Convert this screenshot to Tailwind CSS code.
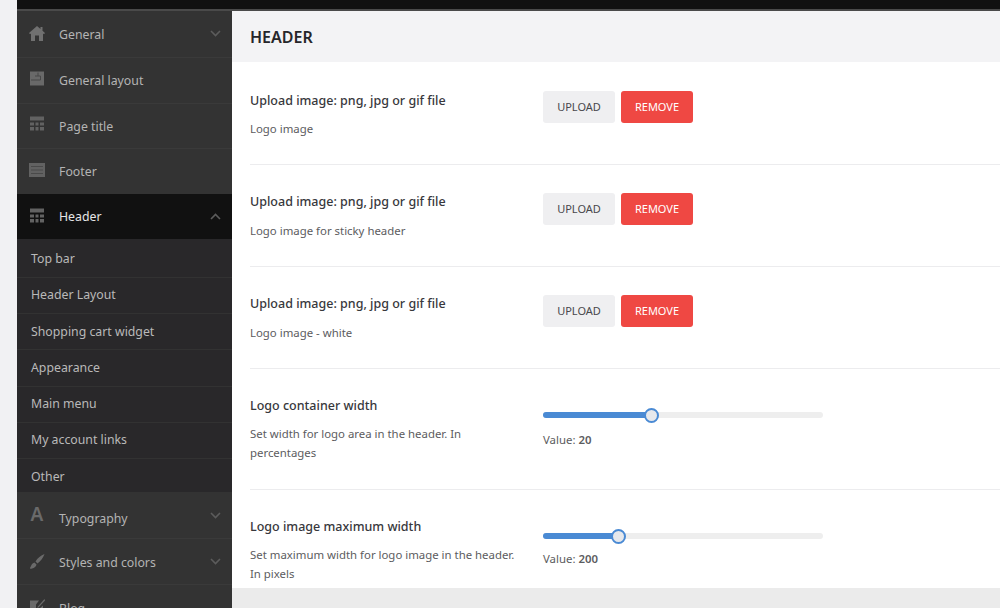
<!DOCTYPE html>
<html lang="en">
<head>
    <meta charset="UTF-8">
    <title>Theme options</title>
    <script src="https://cdn.jsdelivr.net/npm/@tailwindcss/browser@4"></script>
</head>
<body class="bg-[#f1f1f3] font-['Noto_Sans','Open_Sans',sans-serif]">
<div class="flex h-[608px] w-[1000px] overflow-hidden pl-[17px]">

    <!-- SIDEBAR -->
    <aside class="w-[215px] shrink-0 flex flex-col bg-[#333333] text-[12.300px] text-[#b4b4b4]">
        <div class="h-[9px] bg-[#111111] shrink-0"></div>
        <div class="h-[2px] bg-[#4a4a4a] shrink-0"></div>

        <a class="h-[47px] pt-[3px] shrink-0 flex items-center pl-[12px] pr-[11px] border-b border-[#3a3a3a]">
            <svg class="w-[16px] h-[16px] mr-[14px] shrink-0 -translate-y-[2.500px]" viewBox="0 0 16 16" fill="#707070"><path d="M8 0.500 0 7.500 1 8.700 2 7.900V15.500H6V10H10V15.500H14V7.900L15 8.700 16 7.500 13.500 5.300V1.500H11.500V3.600Z"/></svg>
            <span class="flex-1">General</span>
            <svg class="w-[11px] h-[7px] -translate-y-[2px]" viewBox="0 0 11 7" fill="none" stroke="#5c5c5c" stroke-width="1.6"><path d="M1 1 5.500 5.500 10 1"/></svg>
        </a>
        <a class="h-[46px] pt-[2px] shrink-0 flex items-center pl-[12px] pr-[11px] border-b border-[#3a3a3a]">
            <svg class="w-[16px] h-[16px] mr-[14px] shrink-0 -translate-y-[3.500px]" viewBox="0 0 16 16"><path fill="#696969" d="M1 1H15V15H1Z"/><path fill="none" stroke="#484848" stroke-width="1" d="M2 9.500H11.500V5.500H6M9 2V5.500"/></svg>
            <span class="flex-1">General layout</span>
        </a>
        <a class="h-[45px] pt-[2px] shrink-0 flex items-center pl-[12px] pr-[11px] border-b border-[#3a3a3a]">
            <svg class="w-[16px] h-[16px] mr-[14px] shrink-0 -translate-y-[3.500px]" viewBox="0 0 16 16" fill="#626262"><path d="M1 1H15V5H1ZM1 7H5V10H1ZM6.500 7H9.500V10H6.500ZM11 7H15V10H11ZM1 11.500H5V15H1ZM6.500 11.500H9.500V15H6.500ZM11 11.500H15V15H11Z"/></svg>
            <span class="flex-1">Page title</span>
        </a>
        <a class="h-[45px] pt-[2px] shrink-0 flex items-center pl-[12px] pr-[11px]">
            <svg class="w-[16px] h-[16px] mr-[14px] shrink-0 -translate-y-[3px]" viewBox="0 0 16 16"><path fill="#626262" d="M0 1H16V15H0Z"/><path fill="none" stroke="#4a4a4a" stroke-width="1" d="M2 4.500H14M2 8H14M2 11.500H14"/></svg>
            <span class="flex-1">Footer</span>
        </a>

        <a class="h-[45px] pt-[2px] shrink-0 flex items-center pl-[12px] pr-[11px] bg-[#111111] text-[#e6e6e6]">
            <svg class="w-[16px] h-[16px] mr-[14px] shrink-0 -translate-y-[2.500px]" viewBox="0 0 16 16" fill="#626262"><path d="M1 1H15V5H1ZM1 7H5V10H1ZM6.500 7H9.500V10H6.500ZM11 7H15V10H11ZM1 11.500H5V15H1ZM6.500 11.500H9.500V15H6.500ZM11 11.500H15V15H11Z"/></svg>
            <span class="flex-1">Header</span>
            <svg class="w-[11px] h-[7px] -translate-y-[1px]" viewBox="0 0 11 7" fill="none" stroke="#5c5c5c" stroke-width="1.6"><path d="M1 6 5.500 1.500 10 6"/></svg>
        </a>

        <!-- HEADER SUBMENU -->
        <div class="h-[253px] shrink-0 flex flex-col bg-[#29282a] text-[#b9b9b9] pt-[2.500px]">
            <a class="h-[36.300px] shrink-0 flex items-center px-[14px] border-b border-[#323232]">Top bar</a>
            <a class="h-[36.300px] shrink-0 flex items-center px-[14px] border-b border-[#323232]">Header Layout</a>
            <a class="h-[36.300px] shrink-0 flex items-center px-[14px] border-b border-[#323232]">Shopping cart widget</a>
            <a class="h-[36.300px] shrink-0 flex items-center px-[14px] border-b border-[#323232]">Appearance</a>
            <a class="h-[36.300px] shrink-0 flex items-center px-[14px] border-b border-[#323232]">Main menu</a>
            <a class="h-[36.300px] shrink-0 flex items-center px-[14px] border-b border-[#323232]">My account links</a>
            <a class="h-[32.700px] pt-[3px] shrink-0 flex items-center px-[14px]">Other</a>
        </div>

        <a class="h-[47px] pt-[8px] shrink-0 flex items-center pl-[12px] pr-[11px] border-b border-[#3a3a3a]">
            <span class="w-[16px] mr-[14px] shrink-0 text-center text-[19px] leading-none font-semibold text-[#6a6a6a] -translate-y-[5px]">A</span>
            <span class="flex-1">Typography</span>
            <svg class="w-[11px] h-[7px] -translate-y-[4px]" viewBox="0 0 11 7" fill="none" stroke="#5c5c5c" stroke-width="1.6"><path d="M1 1 5.500 5.500 10 1"/></svg>
        </a>
        <a class="h-[46px] pt-[4px] shrink-0 flex items-center pl-[12px] pr-[11px] border-b border-[#3a3a3a]">
            <svg class="w-[16px] h-[16px] mr-[14px] shrink-0 -translate-y-[2.500px]" viewBox="0 0 16 16" fill="#6a6a6a"><path d="M15.500 0.500C12 2 8.500 4.500 6.500 8L8.500 10C11.500 7.500 14.500 4 15.500 0.500ZM5.500 9C3 9.500 2.500 11.500 1 14.500 1 15.500 2 15.500 3 15 5.500 14.500 7 13 7.500 11Z"/></svg>
            <span class="flex-1">Styles and colors</span>
            <svg class="w-[11px] h-[7px] -translate-y-[2px]" viewBox="0 0 11 7" fill="none" stroke="#5c5c5c" stroke-width="1.6"><path d="M1 1 5.500 5.500 10 1"/></svg>
        </a>
        <a class="h-[45px] pt-[4px] shrink-0 flex items-center pl-[12px] pr-[11px]">
            <svg class="w-[16px] h-[16px] mr-[14px] shrink-0 -translate-y-[3.500px]" viewBox="0 0 16 16" fill="#6a6a6a"><path d="M1 2H10L7 6V10H10.500L14 7V15H1ZM15.500 0.500 8.500 8.500 8 9 9.500 9 16 2Z"/></svg>
            <span class="flex-1">Blog</span>
        </a>
    </aside>

    <!-- MAIN -->
    <main class="flex-1 flex flex-col bg-[#ebebeb]">
        <div class="h-[9px] bg-[#111111] shrink-0"></div>
        <div class="h-[2px] bg-[#4a4a4a] shrink-0"></div>
        <div class="h-[51px] shrink-0 bg-[#f3f3f5] flex items-center pl-[18px]">
            <h1 class="text-[16px] font-semibold text-[#26262a]">HEADER</h1>
        </div>

        <div class="h-[526px] shrink-0 bg-white pl-[18px] flex flex-col text-[#5c5c60]">
            <!-- Logo image -->
            <div class="h-[103px] shrink-0 flex border-b border-[#ececee]">
                <div class="w-[293px] shrink-0 pt-[28px]">
                    <p class="text-[12.500px] leading-[20px] font-medium text-[#38383c] translate-y-[1px]">Upload image: png, jpg or gif file</p>
                    <p class="text-[11.400px] leading-[18px] mt-[10px]">Logo image</p>
                </div>
                <div class="flex gap-[6px] pt-[29px] text-[11px]">
                    <button class="w-[72px] h-[32px] rounded-[3px] bg-[#efeff1] text-[#48484c]">UPLOAD</button>
                    <button class="w-[72px] h-[32px] rounded-[3px] bg-[#ef4843] text-white">REMOVE</button>
                </div>
            </div>
            <div class="h-[102px] shrink-0 flex border-b border-[#ececee]">
                <div class="w-[293px] shrink-0 pt-[27px]">
                    <p class="text-[12.500px] leading-[20px] font-medium text-[#38383c]">Upload image: png, jpg or gif file</p>
                    <p class="text-[11.400px] leading-[18px] mt-[10px]">Logo image for sticky header</p>
                </div>
                <div class="flex gap-[6px] pt-[28px] text-[11px]">
                    <button class="w-[72px] h-[32px] rounded-[3px] bg-[#efeff1] text-[#48484c]">UPLOAD</button>
                    <button class="w-[72px] h-[32px] rounded-[3px] bg-[#ef4843] text-white">REMOVE</button>
                </div>
            </div>
            <div class="h-[102px] shrink-0 flex border-b border-[#ececee]">
                <div class="w-[293px] shrink-0 pt-[27px]">
                    <p class="text-[12.500px] leading-[20px] font-medium text-[#38383c]">Upload image: png, jpg or gif file</p>
                    <p class="text-[11.400px] leading-[18px] mt-[10px]">Logo image - white</p>
                </div>
                <div class="flex gap-[6px] pt-[28px] text-[11px]">
                    <button class="w-[72px] h-[32px] rounded-[3px] bg-[#efeff1] text-[#48484c]">UPLOAD</button>
                    <button class="w-[72px] h-[32px] rounded-[3px] bg-[#ef4843] text-white">REMOVE</button>
                </div>
            </div>

            <!-- Sliders -->
            <div class="h-[121px] shrink-0 flex border-b border-[#ececee]">
                <div class="w-[293px] shrink-0 pt-[27px] pr-[20px]">
                    <p class="text-[12.500px] leading-[20px] font-medium text-[#38383c]">Logo container width</p>
                    <p class="text-[11.400px] leading-[19px] mt-[8px]">Set width for logo area in the header. In percentages</p>
                </div>
                <div class="w-[280px] pt-[43px]">
                    <div class="relative h-[6px] rounded-full bg-[#eeeeee]">
                        <div class="h-full w-[108px] rounded-full bg-[#4a8ad4]"></div>
                        <div class="absolute left-[100.500px] top-[-4.500px] w-[15px] h-[15px] rounded-full bg-[#e6e8ec] border-2 border-[#4a8ad4]"></div>
                    </div>
                    <p class="text-[11.400px] leading-[18px] mt-[13px]">Value: <b class="font-semibold">20</b></p>
                </div>
            </div>
            <div class="flex-1 flex">
                <div class="w-[293px] shrink-0 pt-[27px] pr-[20px]">
                    <p class="text-[12.500px] leading-[20px] font-medium text-[#38383c]">Logo image maximum width</p>
                    <p class="text-[11.400px] leading-[19px] mt-[8px]">Set maximum width for logo image in the header. In pixels</p>
                </div>
                <div class="w-[280px] pt-[43px]">
                    <div class="relative h-[6px] rounded-full bg-[#eeeeee]">
                        <div class="h-full w-[75px] rounded-full bg-[#4a8ad4]"></div>
                        <div class="absolute left-[67.500px] top-[-4.500px] w-[15px] h-[15px] rounded-full bg-[#e6e8ec] border-2 border-[#4a8ad4]"></div>
                    </div>
                    <p class="text-[11.400px] leading-[18px] mt-[11px]">Value: <b class="font-semibold">200</b></p>
                </div>
            </div>
        </div>
    </main>
</div>
</body>
</html>
